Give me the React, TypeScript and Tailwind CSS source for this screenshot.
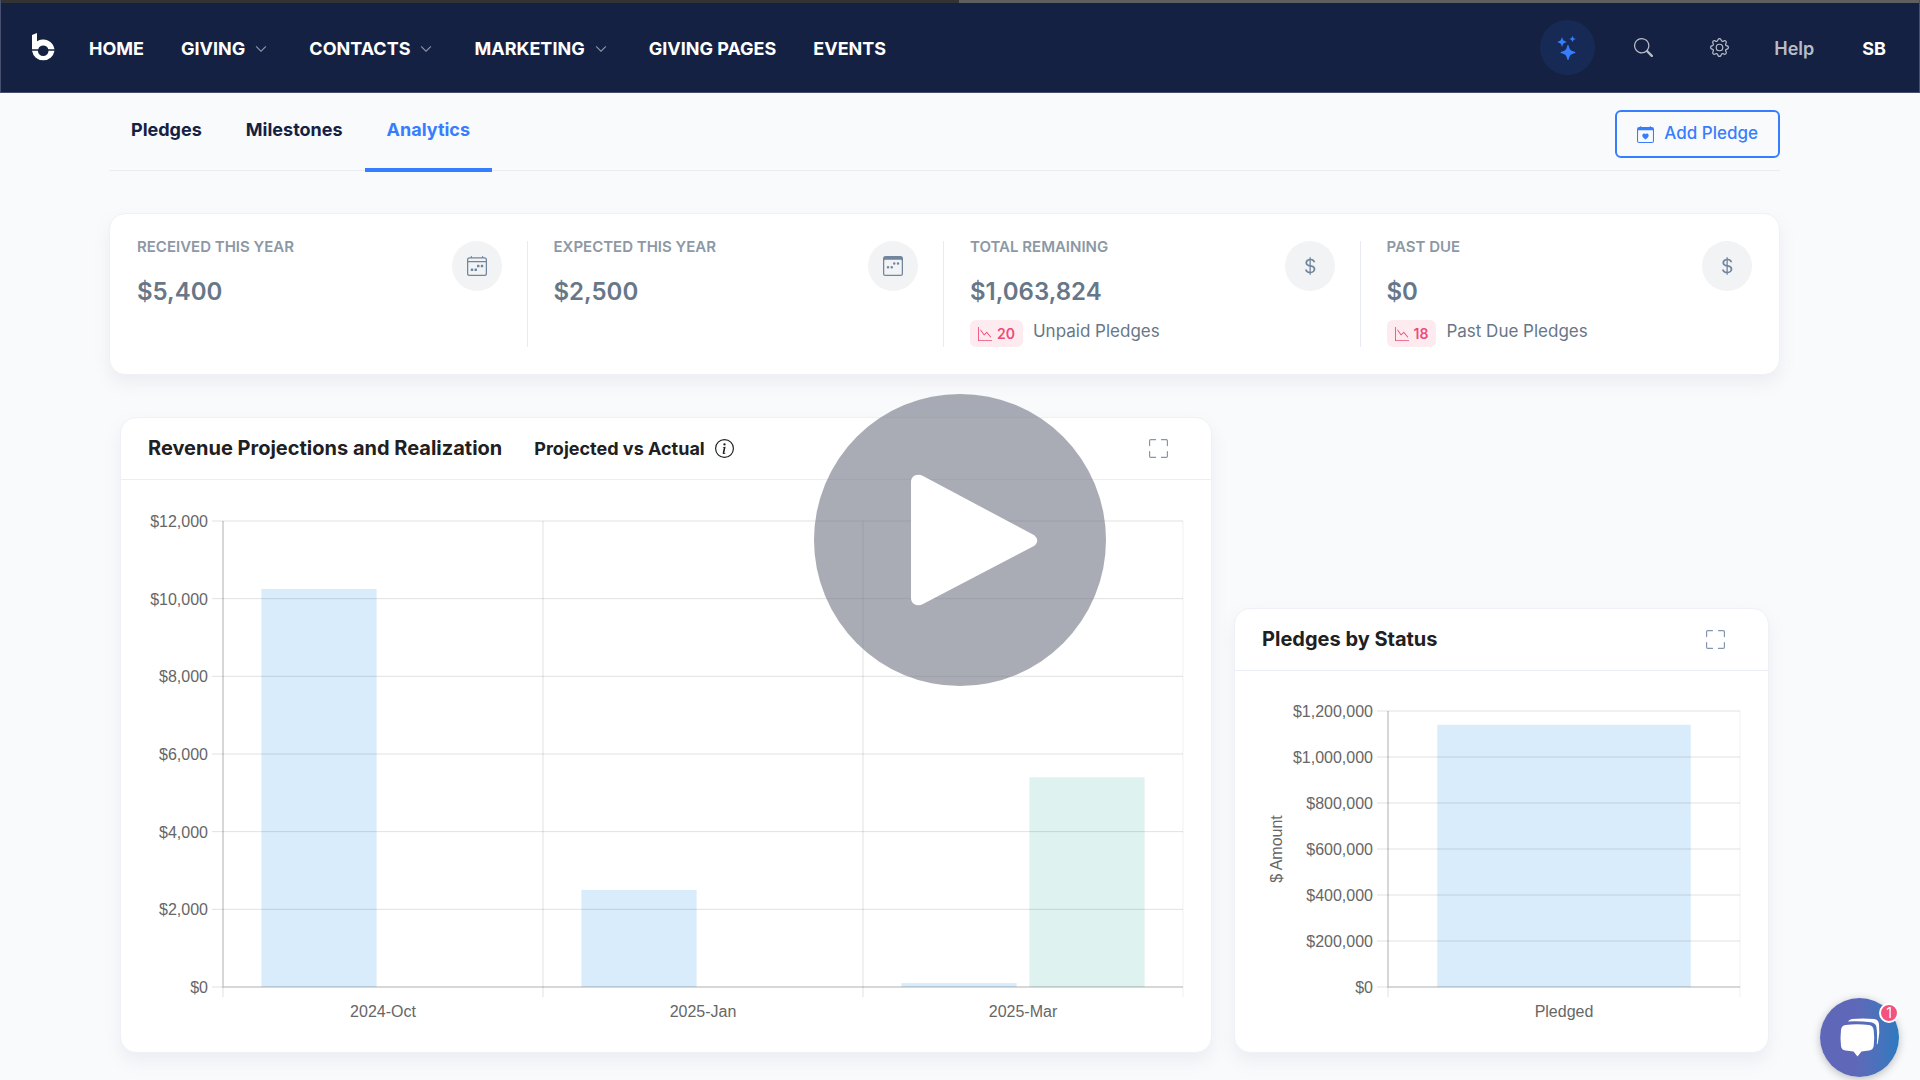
import type { ReactNode } from 'react';
import {
  BsCalendar3Week,
  BsCalendar4Week,
  BsCalendarHeart,
  BsChevronDown,
  BsCurrencyDollar,
  BsFullscreen,
  BsGear,
  BsGraphDown,
  BsInfoCircle,
  BsSearch,
  BsStars,
} from 'react-icons/bs';

const navItems = [
  { label: 'HOME', menu: false },
  { label: 'GIVING', menu: true },
  { label: 'CONTACTS', menu: true },
  { label: 'MARKETING', menu: true },
  { label: 'GIVING PAGES', menu: false },
  { label: 'EVENTS', menu: false },
];

const tabs = ['Pledges', 'Milestones', 'Analytics'];

const stats = [
  { label: 'RECEIVED THIS YEAR', value: '$5,400', icon: <BsCalendar4Week /> },
  { label: 'EXPECTED THIS YEAR', value: '$2,500', icon: <BsCalendar3Week /> },
  { label: 'TOTAL REMAINING', value: '$1,063,824', icon: <BsCurrencyDollar />, count: 20, note: 'Unpaid Pledges' },
  { label: 'PAST DUE', value: '$0', icon: <BsCurrencyDollar />, count: 18, note: 'Past Due Pledges' },
];

const BLUE = '#d9ecfb';
const GREEN = '#def2f0';

type Bar = { value: number; start: number; width: number; color: string };
type Category = { label: string; bars: Bar[] };

const revenue: Category[] = [
  { label: '2024-Oct', bars: [{ value: 10250, start: 0.12, width: 0.36, color: BLUE }] },
  { label: '2025-Jan', bars: [{ value: 2500, start: 0.12, width: 0.36, color: BLUE }] },
  {
    label: '2025-Mar',
    bars: [
      { value: 100, start: 0.12, width: 0.36, color: BLUE },
      { value: 5400, start: 0.52, width: 0.36, color: GREEN },
    ],
  },
];

const byStatus: Category[] = [
  { label: 'Pledged', bars: [{ value: 1140000, start: 0.14, width: 0.72, color: BLUE }] },
];

function Logo() {
  return (
    <svg viewBox="0 0 24 30" className="h-[30px] w-6" fill="#fff" aria-label="Home">
      <path d="M1 2 6 0v8.200A11.500 11.500 0 0 1 23.500 16.200H17.300a5.300 5.300 0 0 0-10.100 0H1z" />
      <path d="M1 17.800h5.900a5.300 5.300 0 0 0 10.600 0h6A11.400 11.400 0 0 1 1 17.800z" />
    </svg>
  );
}

function Header() {
  return (
    <header className="border-x border-b border-[#46506e] bg-[#142143]">
      <div className="h-[3px] bg-[#5f5f5f]">
        <div className="h-full w-[958px] max-w-full bg-[#333333]" />
      </div>
      <div className="flex h-[89px] items-center pr-[33px] pl-[30px] text-lg font-bold text-white">
        <a href="#home" className="mr-[34px]">
          <Logo />
        </a>
        <nav className="flex items-center gap-[37px] pt-0.5">
          {navItems.map((item) =>
            item.menu ? (
              <button key={item.label} className="mr-[5px] flex items-center gap-[10px]">
                {item.label}
                <BsChevronDown className="size-3 stroke-[0.5] text-[#a1a6b4]" />
              </button>
            ) : (
              <a key={item.label} href="#">
                {item.label}
              </a>
            ),
          )}
        </nav>
        <div className="ml-auto flex items-center">
          <button aria-label="Assistant" className="flex size-[55px] items-center justify-center rounded-full bg-[#172a55]">
            <BsStars className="size-6 text-[#377dff]" />
          </button>
          <button aria-label="Search" className="ml-[39px] text-[#b9bcc7]">
            <BsSearch className="size-[19px]" />
          </button>
          <button aria-label="Settings" className="ml-[57px] text-[#b9bcc7]">
            <BsGear className="size-[19px]" />
          </button>
          <a href="#help" className="ml-[45px] pt-0.5 font-semibold text-[#b9bcc7]">
            Help
          </a>
          <button className="ml-12 pt-0.5">SB</button>
        </div>
      </div>
    </header>
  );
}

function TabBar() {
  return (
    <div className="flex h-[78px] items-start justify-between border-b border-[#eaedf1]">
      <div className="flex h-[79px]" role="tablist">
        {tabs.map((tab) => (
          <button
            key={tab}
            role="tab"
            aria-selected={tab === 'Analytics'}
            className={`flex items-start border-b-4 px-[22px] pt-[23px] text-lg font-bold ${
              tab === 'Analytics' ? 'border-[#377dff] text-[#377dff]' : 'border-transparent text-[#142143]'
            }`}
          >
            {tab}
          </button>
        ))}
      </div>
      <button className="mt-[17px] flex h-12 items-center gap-[10px] rounded-md border-2 border-[#377dff] px-5 text-[17px] font-medium text-[#377dff]">
        <BsCalendarHeart className="size-[17px]" />
        Add Pledge
      </button>
    </div>
  );
}

function Stats() {
  return (
    <section className="mt-[42px] grid grid-cols-4 rounded-2xl border border-[#eff1f6] bg-white pt-[27px] pr-0.5 pb-[27px] pl-px shadow-[0_8px_16px_rgba(140,152,164,0.12)]">
      {stats.map((stat) => (
        <div
          key={stat.label}
          className="flex min-h-[105px] justify-between border-r border-[#e9ebf3] pr-[25px] pl-[26px] last:border-r-0"
        >
          <div>
            <h2 className="text-[15px] leading-3 font-semibold text-[#8c98a4]">{stat.label}</h2>
            <p className="mt-[23px] text-2xl leading-8 font-semibold text-[#677788]">{stat.value}</p>
            {stat.note && (
              <div className="mt-3 flex gap-[10px]">
                <span className="flex h-[27px] items-center gap-[5px] rounded-md bg-[#feebf0] px-2 text-sm font-semibold text-[#ed4c78]">
                  <BsGraphDown className="size-[14px]" />
                  {stat.count}
                </span>
                <span className="text-[17px] leading-[23px] text-[#677788]">{stat.note}</span>
              </div>
            )}
          </div>
          <span className="flex size-[50px] items-center justify-center rounded-full bg-[#f1f3f5] text-xl text-[#71869d]">
            {stat.icon}
          </span>
        </div>
      ))}
    </section>
  );
}

function Card({ title, extra, className, children }: { title: string; extra?: ReactNode; className: string; children: ReactNode }) {
  return (
    <section className={`rounded-2xl border border-[#eff1f6] bg-white shadow-[0_8px_16px_rgba(140,152,164,0.12)] ${className}`}>
      <div className="flex h-[62px] items-center border-b border-[#eceef6] pr-[43px] pl-[27px] text-[#1e2022]">
        <h2 className="pb-0.5 text-xl font-bold">{title}</h2>
        {extra}
        <button aria-label="Full screen" className="ml-auto text-[#8396ac]">
          <BsFullscreen className="size-[19px]" />
        </button>
      </div>
      {children}
    </section>
  );
}

type ChartProps = {
  data: Category[];
  max: number;
  step: number;
  width: number;
  height: number;
  left: number;
  right: number;
  top: number;
  bottom: number;
  axisTitle?: string;
};

function BarChart({ data, max, step, width, height, left, right, top, bottom, axisTitle }: ChartProps) {
  const y = (value: number) => bottom - (value / max) * (bottom - top);
  const slot = (right - left) / data.length;
  const ticks = Array.from({ length: max / step + 1 }, (_, i) => i * step);

  return (
    <svg
      viewBox={`0 0 ${width} ${height}`}
      className="block w-full font-['Liberation_Sans',Arial,sans-serif] text-base"
      fill="#666"
    >
      {data.map((category, i) =>
        category.bars.map((bar) => (
          <rect
            key={`${category.label}-${bar.start}`}
            x={left + slot * (i + bar.start)}
            y={y(bar.value)}
            width={slot * bar.width}
            height={bottom - y(bar.value)}
            fill={bar.color}
          />
        )),
      )}
      {ticks.map((tick) => (
        <g key={tick}>
          <line x1={left - 11} x2={right} y1={y(tick)} y2={y(tick)} stroke="#000" strokeOpacity="0.12" />
          <text x={left - 15} y={y(tick) + 6} textAnchor="end">
            ${tick.toLocaleString('en-US')}
          </text>
        </g>
      ))}
      {Array.from({ length: data.length + 1 }, (_, i) => (
        <line
          key={i}
          x1={left + slot * i}
          x2={left + slot * i}
          y1={top}
          y2={bottom + 10}
          stroke="#000"
          strokeOpacity={i === data.length ? 0.06 : 0.12}
        />
      ))}
      <path d={`M${left} ${top}V${bottom}H${right}`} fill="none" stroke="#000" strokeOpacity="0.1" strokeWidth="2" />
      {data.map((category, i) => (
        <text key={category.label} x={left + slot * (i + 0.5)} y={bottom + 30} textAnchor="middle">
          {category.label}
        </text>
      ))}
      {axisTitle && (
        <text transform={`translate(47 ${(top + bottom) / 2}) rotate(-90)`} textAnchor="middle">
          {axisTitle}
        </text>
      )}
    </svg>
  );
}

function PlayButton() {
  return (
    <button aria-label="Play video" className="fixed top-1/2 left-1/2 size-[292px] -translate-x-1/2 -translate-y-1/2">
      <svg viewBox="0 0 292 292" className="size-full">
        <circle cx="146" cy="146" r="146" fill="rgb(112,117,132)" fillOpacity="0.6" />
        <path
          d="M97 88c0-6 6-9 12-6l109 58c7 3 7 10 0 13l-109 57c-6 3-12 0-12-6z"
          fill="#fff"
        />
      </svg>
    </button>
  );
}

function ChatButton() {
  return (
    <button
      aria-label="Open chat, 1 new message"
      className="fixed right-[21px] bottom-[3px] flex size-[79px] items-center justify-center rounded-full bg-linear-to-r from-[#5f68b8] from-45% to-[#2a7abf] shadow-[0_2px_8px_rgba(0,0,0,0.25)]"
    >
      <svg viewBox="0 0 40 40" className="mb-px size-10" fill="#fff">
        <path d="M8 4.500Q9 2.500 12 2Q23 .8 34 2Q38.500 2.500 39 7Q40 16 38 25Q37.700 27.500 36.800 27.500Q37.500 17 36.500 10.500Q36 6 31 5.200Q20 4 8 4.500z" />
        <path d="M5.500 8Q17 6.500 29 8Q33 8.500 33.700 13Q34.700 21 33.700 29Q33 33 29 33.500L21.500 34.500 17.500 39.500 13.500 34.500 5.500 33.500Q1.500 33 1 29Q0 21 1 13Q1.500 8.500 5.500 8z" />
      </svg>
      <span className="absolute top-[5px] right-0 flex size-5 items-center justify-center rounded-full border-2 border-white bg-[#f5517f] text-sm leading-none text-white">
        1
      </span>
    </button>
  );
}

export default function App() {
  return (
    <div className="min-h-screen bg-[#f9fafc] font-['Inter','Liberation_Sans',sans-serif]">
      <Header />
      <main className="pr-[140px] pb-7 pl-[109px]">
        <TabBar />
        <Stats />
        <div className="mt-[42px] grid grid-cols-3 items-end gap-[22px] px-[11px]">
          <Card
            title="Revenue Projections and Realization"
            className="col-span-2"
            extra={
              <h3 className="ml-8 flex items-center gap-[10px] text-lg font-bold">
                Projected vs Actual
                <BsInfoCircle className="size-[19px]" />
              </h3>
            }
          >
            <BarChart
              data={revenue}
              max={12000}
              step={2000}
              width={1090}
              height={572}
              left={102}
              right={1062}
              top={41}
              bottom={507}
            />
          </Card>
          <Card title="Pledges by Status" className="col-span-1">
            <BarChart
              data={byStatus}
              max={1200000}
              step={200000}
              width={533}
              height={381}
              left={153}
              right={505}
              top={40}
              bottom={316}
              axisTitle="$ Amount"
            />
          </Card>
        </div>
      </main>
      <PlayButton />
      <ChatButton />
    </div>
  );
}
